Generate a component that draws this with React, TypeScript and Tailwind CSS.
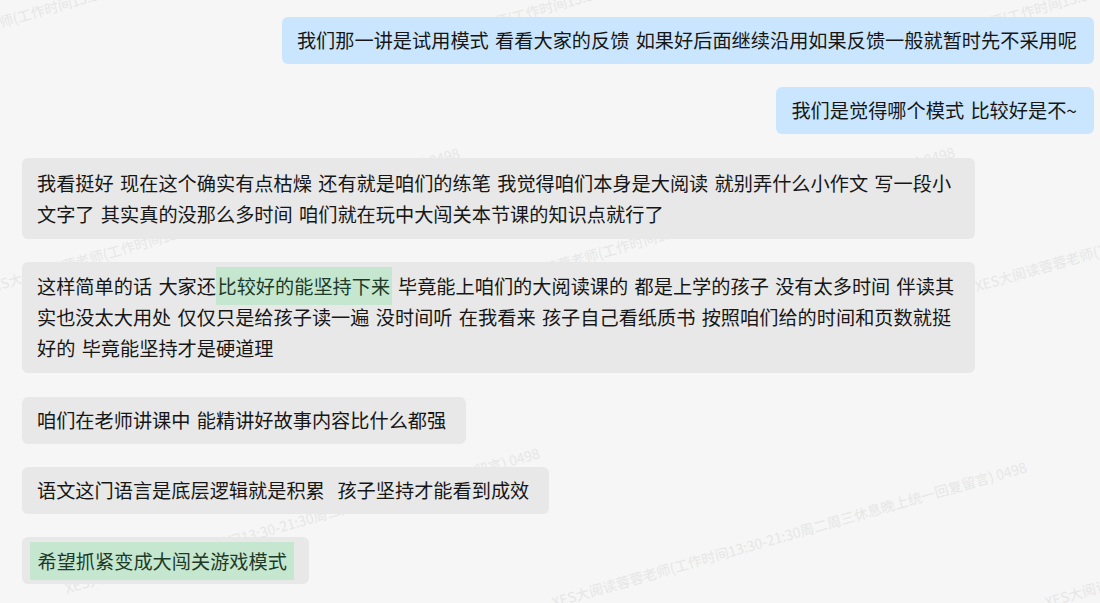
import React from 'react'

const mark = 'XES大阅读蓉蓉老师(工作时间13:30-21:30周二周三休息晚上统一回复留言) 0498'

// tiled watermark anchors (start of each text run)
const marks: [number, number][] = [
  [-105, 56],
  [390, 56],
  [885, 56],
  [-15, 292],
  [480, 291],
  [975, 290],
  [65, 592],
  [552, 606],
  [1045, 606],
]

const bubbleText =
  "font-['Noto_Sans_CJK_SC','Noto_Sans',sans-serif] text-[19.2px] leading-[31px] text-[#161616] [word-spacing:2px] whitespace-pre"

function Mine({ children }: { children: React.ReactNode }) {
  return (
    <div className={`self-end mr-[6px] rounded-[6px] bg-[#c9e6fe] pl-[15px] pr-[17px] py-[8px] ${bubbleText}`}>
      {children}
    </div>
  )
}

function Theirs({ children, className = 'py-[8px]' }: { children: React.ReactNode; className?: string }) {
  return (
    <div className={`self-start ml-[22px] rounded-[6px] bg-[#e8e8e8] pl-[15px] pr-[20px] ${className} ${bubbleText}`}>
      {children}
    </div>
  )
}

function Mark({ children }: { children: React.ReactNode }) {
  return <span className="bg-[#c5e7d0] text-[#1d3a28] py-[5px] px-[1.5px]">{children}</span>
}

export default function App() {
  return (
    <div className="relative h-[603px] w-full overflow-hidden bg-[#f6f6f6]">
      {/* watermark layer, sits under the bubbles */}
      <div className="pointer-events-none absolute inset-0">
        {marks.map(([x, y], i) => (
          <span
            key={i}
            className="absolute origin-left -rotate-[16deg] whitespace-nowrap font-['Noto_Sans_CJK_SC',sans-serif] text-[14px] leading-[20px] text-[#e6e6e6]"
            style={{ left: x, top: y - 14 }}
          >
            {mark}
          </span>
        ))}
      </div>

      <div className="relative flex flex-col gap-[23.4px] pt-[17px]">
        <Mine>我们那一讲是试用模式 看看大家的反馈 如果好后面继续沿用如果反馈一般就暂时先不采用呢</Mine>
        <Mine>我们是觉得哪个模式 比较好是不~</Mine>

        <Theirs className="w-[953px] pt-[10px] pb-[9px]">
          我看挺好 现在这个确实有点枯燥 还有就是咱们的练笔 我觉得咱们本身是大阅读 就别弄什么小作文 写一段小
          <br />
          文字了 其实真的没那么多时间 咱们就在玩中大闯关本节课的知识点就行了
        </Theirs>

        <Theirs className="w-[953px] py-[9px]">
          这样简单的话 大家还<Mark>比较好的能坚持下来</Mark> 毕竟能上咱们的大阅读课的 都是上学的孩子 没有太多时间 伴读其
          <br />
          实也没太大用处 仅仅只是给孩子读一遍 没时间听 在我看来 孩子自己看纸质书 按照咱们给的时间和页数就挺
          <br />
          好的 毕竟能坚持才是硬道理
        </Theirs>

        <Theirs>咱们在老师讲课中 能精讲好故事内容比什么都强</Theirs>
        <Theirs>语文这门语言是底层逻辑就是积累  孩子坚持才能看到成效</Theirs>

        <Theirs className="pl-[8px]! pr-[15px]! pt-[5px] pb-[4px]">
          <span className="block bg-[#c5e7d0] px-[7.5px] leading-[38px] text-[#1d3a28]">希望抓紧变成大闯关游戏模式</span>
        </Theirs>
      </div>
    </div>
  )
}
